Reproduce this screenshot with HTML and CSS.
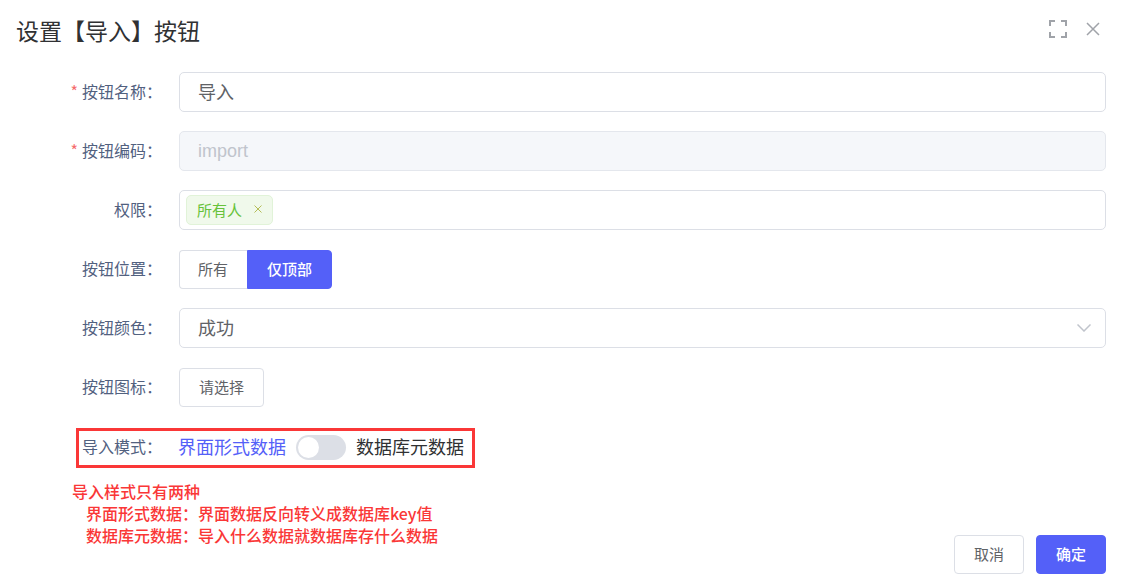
FILE: index.html
```html
<!DOCTYPE html>
<html lang="zh-CN">
<head>
    <meta charset="UTF-8">
    <meta name="viewport" content="width=device-width, initial-scale=1.0">
    <title>设置【导入】按钮</title>
    <link rel="stylesheet" href="styles.css">
</head>
<body>
    <form class="dialog">
        <div class="dialog-header">
            <h1>设置【导入】按钮</h1>
            <div class="header-tools">
                <button type="button" class="icon-btn" aria-label="全屏">
                    <svg width="18" height="18" viewBox="0 0 18 18"><path d="M1 6V1H6M12 1H17V6M17 12V17H12M6 17H1V12"/></svg>
                </button>
                <button type="button" class="icon-btn" aria-label="关闭">
                    <svg class="close-icon" width="18" height="18" viewBox="0 0 18 18"><path d="M3 3L15 15M15 3L3 15"/></svg>
                </button>
            </div>
        </div>

        <div class="form-body">
            <div class="form-item">
                <label class="form-label required" for="btn-name">按钮名称：</label>
                <input type="text" class="field" id="btn-name" value="导入">
            </div>
            <div class="form-item">
                <label class="form-label required" for="btn-code">按钮编码：</label>
                <input type="text" class="field" id="btn-code" value="import" disabled>
            </div>
            <div class="form-item">
                <label class="form-label" for="btn-auth">权限：</label>
                <div class="field tag-field">
                    <span class="tag">所有人
                        <button type="button" class="tag-close" aria-label="移除">
                            <svg width="8" height="8" viewBox="0 0 8 8"><path d="M0.5 0.5L7.5 7.5M7.5 0.5L0.5 7.5"/></svg>
                        </button>
                    </span>
                    <input type="text" class="tag-input" id="btn-auth">
                </div>
            </div>
            <div class="form-item">
                <span class="form-label" id="position-label">按钮位置：</span>
                <div class="radio-group" role="radiogroup" aria-labelledby="position-label">
                    <input type="radio" name="position" id="pos-all">
                    <label for="pos-all">所有</label>
                    <input type="radio" name="position" id="pos-top" checked>
                    <label for="pos-top">仅顶部</label>
                </div>
            </div>
            <div class="form-item">
                <label class="form-label" for="btn-color">按钮颜色：</label>
                <div class="select-wrap">
                    <select class="field" id="btn-color">
                        <option>成功</option>
                    </select>
                    <svg class="arrow" width="14" height="8" viewBox="0 0 14 8"><path d="M0.5 0.5L7 7L13.5 0.5"/></svg>
                </div>
            </div>
            <div class="form-item">
                <label class="form-label" for="btn-icon">按钮图标：</label>
                <button type="button" class="btn" id="btn-icon">请选择</button>
            </div>
            <div class="form-item mode-item">
                <label class="form-label" for="import-mode">导入模式：</label>
                <div class="mode">
                    <span class="mode-text active">界面形式数据</span>
                    <input type="checkbox" role="switch" class="switch" id="import-mode">
                    <span class="mode-text">数据库元数据</span>
                </div>
            </div>
        </div>

        <div class="dialog-footer">
            <div class="note">
                <p>导入样式只有两种</p>
                <p class="indent">界面形式数据：界面数据反向转义成数据库key值</p>
                <p class="indent">数据库元数据：导入什么数据就数据库存什么数据</p>
            </div>
            <div class="actions">
                <button type="button" class="btn">取消</button>
                <button type="submit" class="btn btn-primary">确定</button>
            </div>
        </div>
    </form>
</body>
</html>
```

FILE: styles.css
```css
* {
    box-sizing: border-box;
}

body {
    margin: 0;
    font-family: "Noto Sans CJK SC", "Liberation Sans", sans-serif;
    background: #fff;
    color: #303133;
}

button, input, select {
    font-family: inherit;
}

svg {
    display: block;
    fill: none;
    stroke: currentColor;
}

.dialog {
    padding: 0 29px 12px 0;
}

/* header */
.dialog-header {
    display: flex;
    justify-content: space-between;
    align-items: center;
    height: 60px;
    padding-left: 16px;
}

h1 {
    margin: 0;
    font-size: 23px;
    line-height: 32px;
    font-weight: 400;
}

.header-tools {
    display: flex;
    gap: 17px;
    padding: 0 4px 2px 0;
}

.icon-btn {
    padding: 0;
    border: none;
    background: none;
    color: #a0a3a9;
    stroke-width: 2;
    cursor: pointer;
}

.close-icon {
    stroke-width: 1.5;
}

/* form */
.form-body {
    display: flex;
    flex-direction: column;
    gap: 19px;
    padding-top: 12px;
}

.form-item {
    display: flex;
    align-items: center;
    gap: 17px;
    min-height: 40px;
}

.form-label {
    flex: none;
    width: 162px;
    padding-bottom: 2px;
    font-size: 16px;
    line-height: 24px;
    text-align: right;
    color: #52617f;
}

.required::before {
    content: "*";
    margin-right: 4px;
    color: #f56c6c;
}

.field {
    flex: 1;
    min-width: 0;
    width: 100%;
    height: 40px;
    padding: 0 18px 2px;
    border: 1px solid #dcdfe6;
    border-radius: 5px;
    background: #fff;
    font-size: 18px;
    color: #606266;
}

.field:disabled {
    padding-bottom: 0;
    background: #f5f7fa;
    border-color: #e4e7ed;
    font-family: "Liberation Sans", sans-serif;
    color: #c0c4cc;
}

.tag-field {
    display: flex;
    align-items: center;
    padding: 0 6px;
}

.tag {
    display: flex;
    align-items: center;
    gap: 12px;
    height: 30px;
    padding: 0 10px 2px;
    border: 1px solid #e1f3d8;
    border-radius: 5px;
    background: #f0f9eb;
    font-size: 15px;
    color: #67c23a;
}

.tag-close {
    padding: 0;
    border: none;
    background: none;
    color: #b5bd58;
    cursor: pointer;
}

.tag-input {
    flex: 1;
    min-width: 0;
    border: none;
    outline: none;
    font-size: 18px;
}

.radio-group {
    display: flex;
}

.radio-group input {
    position: absolute;
    opacity: 0;
}

.radio-group label {
    height: 39px;
    padding: 0 19px;
    border: 1px solid #dcdfe6;
    font-size: 15px;
    line-height: 35px;
    color: #606266;
    cursor: pointer;
}

.radio-group label:first-of-type {
    padding-left: 18px;
    border-right: none;
    border-radius: 4px 0 0 4px;
}

.radio-group label:last-of-type {
    border-radius: 0 4px 4px 0;
}

.radio-group input:checked + label {
    background: #5460f8;
    border-color: #5460f8;
    color: #fff;
    font-weight: 500;
}

.select-wrap {
    position: relative;
    flex: 1;
}

.select-wrap select {
    display: block;
    appearance: none;
}

.arrow {
    position: absolute;
    top: 16px;
    right: 15px;
    color: #c0c4cc;
    stroke-width: 1.5;
    pointer-events: none;
}

.btn {
    height: 39px;
    padding: 0 19px 2px;
    border: 1px solid #dcdfe6;
    border-radius: 4px;
    background: #fff;
    font-size: 15px;
    color: #606266;
    cursor: pointer;
}

.btn-primary {
    background: #5460f8;
    border-color: #5460f8;
    color: #fff;
    font-weight: 500;
}

/* import mode, framed in red */
.mode-item {
    align-self: flex-start;
    gap: 15px;
    margin: 2px 0 0 76px;
    padding: 0 8px 2px 3px;
    border: 3px solid #fa3737;
}

.mode-item .form-label {
    width: 81px;
    text-align: left;
}

.mode {
    display: flex;
    align-items: center;
    gap: 10px;
}

.mode-text {
    padding-bottom: 2px;
    font-size: 18px;
    line-height: 26px;
}

.mode-text.active {
    color: #5460f8;
}

.switch {
    appearance: none;
    width: 50px;
    height: 25px;
    margin: 0;
    padding: 2px;
    border-radius: 13px;
    background: #dcdfe6;
    cursor: pointer;
}

.switch::before {
    content: "";
    display: block;
    width: 21px;
    height: 21px;
    border-radius: 50%;
    background: #fff;
}

.switch:checked::before {
    margin-left: auto;
}

/* footer */
.dialog-footer {
    display: flex;
    justify-content: space-between;
    align-items: flex-end;
    padding-top: 12px;
}

.note {
    padding: 0 0 28px 72px;
    font-size: 16px;
    line-height: 22px;
    font-weight: 500;
    color: #fa3737;
}

.note p {
    margin: 0;
}

.note .indent {
    padding-left: 14px;
}

.actions {
    display: flex;
    flex: none;
    gap: 12px;
}
```
